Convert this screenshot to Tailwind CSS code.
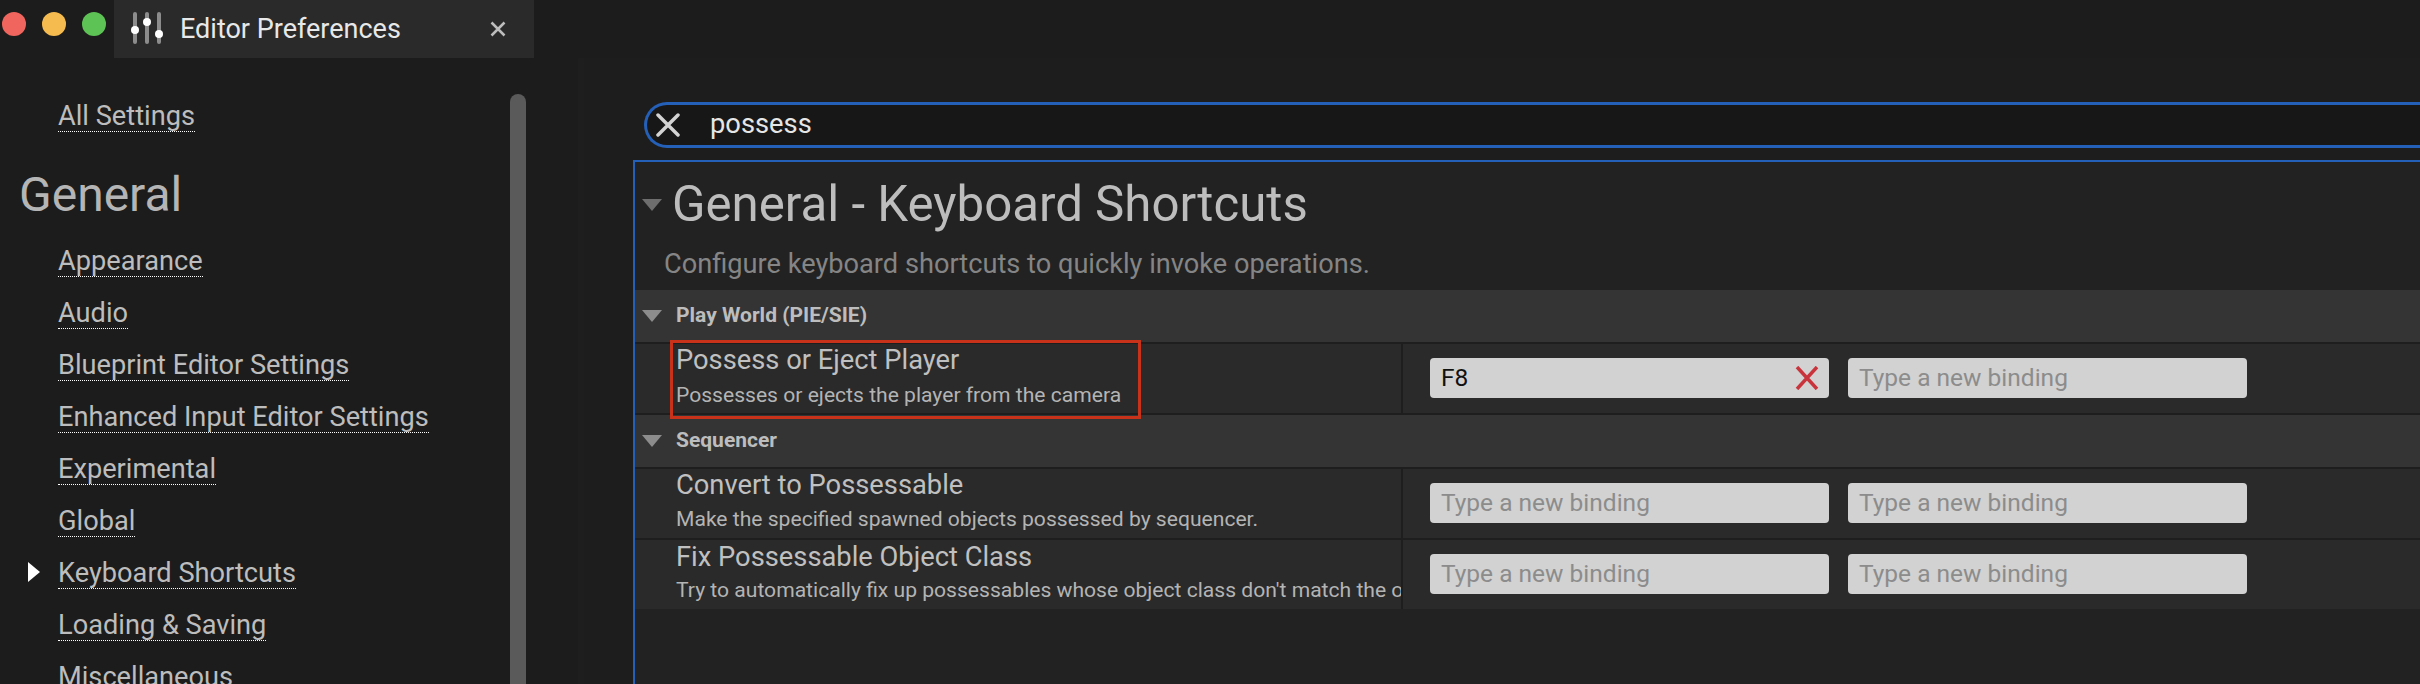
<!DOCTYPE html>
<html><head><meta charset="utf-8"><title>Editor Preferences</title>
<script src="https://cdn.jsdelivr.net/npm/@tailwindcss/browser@4"></script></head>
<body class="w-[2420px] h-[684px] overflow-hidden bg-[#1c1c1c] font-['Roboto',sans-serif]">
<header class="h-[58px] flex">
  <div class="flex gap-4 pl-[2px] pt-3 w-[114px]">
    <span class="w-6 h-6 rounded-full bg-[#f0665e]"></span>
    <span class="w-6 h-6 rounded-full bg-[#f6bb4f]"></span>
    <span class="w-6 h-6 rounded-full bg-[#5cc354]"></span>
  </div>
  <div class="w-[420px] bg-[#2a2a2a] flex items-center pl-4">
    <svg class="w-9 h-9" viewBox="0 0 36 36"><g fill="#8c8c8c"><rect x="3" y="1" width="4" height="32" rx="2"/><rect x="15" y="1" width="4" height="32" rx="2"/><rect x="27" y="1" width="4" height="32" rx="2"/></g><g fill="#fff"><circle cx="5" cy="19" r="4"/><circle cx="17" cy="11" r="4"/><circle cx="29" cy="23" r="4"/></g></svg>
    <span class="ml-[14px] text-[27px] leading-none text-[#e8e8e8] w-[310px] whitespace-nowrap">Editor Preferences</span>
    <svg class="w-4 h-4" viewBox="0 0 16 16"><path d="M1.5 1.5L14.500 14.500M14.500 1.500L1.500 14.500" stroke="#bdbdbd" stroke-width="2.500"/></svg>
  </div>
</header>
<div class="flex h-[626px]">
  <aside class="w-[578px] shrink-0 flex">
    <nav class="w-[510px] pl-[58px] pt-[38px] text-[#bdbdbd] text-[27.200px]">
      <a class="block h-[52px] w-fit"><span class="block h-[36px] leading-[40px] border-b border-dotted border-white">All Settings</span></a>
      <h2 class="text-[48px] leading-[56px] h-[93px] -ml-[39px] pt-[19px] text-[#b5b5b5]">General</h2>
      <a class="block h-[52px] w-fit"><span class="block h-[36px] leading-[40px] border-b border-dotted border-white">Appearance</span></a>
      <a class="block h-[52px] w-fit"><span class="block h-[36px] leading-[40px] border-b border-dotted border-white">Audio</span></a>
      <a class="block h-[52px] w-fit"><span class="block h-[36px] leading-[40px] border-b border-dotted border-white">Blueprint Editor Settings</span></a>
      <a class="block h-[52px] w-fit"><span class="block h-[36px] leading-[40px] border-b border-dotted border-white">Enhanced Input Editor Settings</span></a>
      <a class="block h-[52px] w-fit"><span class="block h-[36px] leading-[40px] border-b border-dotted border-white">Experimental</span></a>
      <a class="block h-[52px] w-fit"><span class="block h-[36px] leading-[40px] border-b border-dotted border-white">Global</span></a>
      <a class="block h-[52px] w-fit relative"><svg class="absolute -left-[30px] top-[9px] w-3 h-5" viewBox="0 0 12 20"><path d="M0 0L12 10L0 20Z" fill="#fff"/></svg><span class="block h-[36px] leading-[40px] border-b border-dotted border-white">Keyboard Shortcuts</span></a>
      <a class="block h-[52px] w-fit"><span class="block h-[36px] leading-[40px] border-b border-dotted border-white">Loading &amp; Saving</span></a>
      <a class="block h-[52px] w-fit"><span class="block h-[36px] leading-[40px] border-b border-dotted border-white">Miscellaneous</span></a>
    </nav>
    <div class="w-4 mt-[36px] rounded-t-full bg-[#5a5a5a]"></div>
  </aside>
  <div class="w-[6px] bg-[#1e1e1e]"></div>
  <main class="flex-1 min-w-0 pl-[49px] bg-[#1d1d1d]">
    <div class="h-[46px] mt-[44px] ml-[11px] border-[3px] border-r-0 border-[#2560b8] rounded-l-[23px] bg-[#171717] flex items-center pl-[9px]">
      <svg class="w-6 h-6" viewBox="0 0 24 24"><path d="M2 2L22 22M22 2L2 22" stroke="#d4d4d4" stroke-width="3.500" stroke-linecap="round"/></svg>
      <span class="ml-[30px] text-[27.300px] leading-none text-[#e6e6e6]">possess</span>
    </div>
    <section class="mt-[12px] h-[530px] border-l-2 border-t-2 border-[#2560b8] bg-[#222222]">
      <div class="h-[80px] flex items-center pl-[7px] pt-[6px]">
        <svg class="w-5 h-3" viewBox="0 0 20 12"><path d="M0 0H20L10 12Z" fill="#6e6e6e"/></svg>
        <h1 class="ml-[10px] text-[49.200px] leading-none text-[#bdbdbd]">General - Keyboard Shortcuts</h1>
      </div>
      <p class="h-[48px] pl-[29px] text-[27.200px] leading-[44px] text-[#858585]">Configure keyboard shortcuts to quickly invoke operations.</p>
      <div class="h-[54px] bg-[#343434] flex items-center pl-[7px] border-b-2 border-[#1e1e1e]">
        <svg class="w-5 h-3" viewBox="0 0 20 12"><path d="M0 0H20L10 12Z" fill="#8c8c8c"/></svg>
        <span class="ml-[14px] text-[21px] font-bold text-[#bdbdbd]">Play World (PIE/SIE)</span>
      </div>
      <div class="relative h-[71px] bg-[#2a2a2a] flex border-b-2 border-[#1e1e1e]">
        <div class="w-[768px] overflow-hidden pl-[41px] border-r-2 border-[#1e1e1e] whitespace-nowrap">
          <div class="text-[27.300px] leading-[30px] mt-[1px] text-[#c0c0c0]">Possess or Eject Player</div>
          <div class="text-[21.100px] leading-[24px] mt-[8px] text-[#b4b4b4]">Possesses or ejects the player from the camera</div>
        </div>
        <div class="flex gap-[19px] pl-[27px] pt-[14px]">
          <div class="w-[399px] h-10 rounded-[4px] bg-[#d2d2d2] flex items-center justify-between px-[11px] text-[24.500px] text-[#111]">F8<svg class="w-6 h-6 -mr-[1px]" viewBox="0 0 24 24"><path d="M2 1L22 23M22 1L2 23" stroke="#c9343c" stroke-width="3.500"/></svg></div>
          <div class="w-[399px] h-10 rounded-[4px] bg-[#d2d2d2] flex items-center px-[11px] text-[24.500px] text-[#8c8c8c]">Type a new binding</div>
        </div>
        <div class="absolute left-[35px] -top-[4px] w-[471px] h-[79px] border-[3px] border-[#c8321a]"></div>
      </div>
      <div class="h-[54px] bg-[#343434] flex items-center pl-[7px] border-b-2 border-[#1e1e1e]">
        <svg class="w-5 h-3" viewBox="0 0 20 12"><path d="M0 0H20L10 12Z" fill="#8c8c8c"/></svg>
        <span class="ml-[14px] text-[21px] font-bold text-[#bdbdbd]">Sequencer</span>
      </div>
      <div class="h-[71px] bg-[#2a2a2a] flex border-b-2 border-[#1e1e1e]">
        <div class="w-[768px] overflow-hidden pl-[41px] border-r-2 border-[#1e1e1e] whitespace-nowrap">
          <div class="text-[27.300px] leading-[30px] mt-[1px] text-[#c0c0c0]">Convert to Possessable</div>
          <div class="text-[21.100px] leading-[24px] mt-[7px] text-[#b4b4b4]">Make the specified spawned objects possessed by sequencer.</div>
        </div>
        <div class="flex gap-[19px] pl-[27px] pt-[14px]">
          <div class="w-[399px] h-10 rounded-[4px] bg-[#d2d2d2] flex items-center px-[11px] text-[24.500px] text-[#8c8c8c]">Type a new binding</div>
          <div class="w-[399px] h-10 rounded-[4px] bg-[#d2d2d2] flex items-center px-[11px] text-[24.500px] text-[#8c8c8c]">Type a new binding</div>
        </div>
      </div>
      <div class="h-[69px] bg-[#2a2a2a] flex">
        <div class="w-[768px] overflow-hidden pl-[41px] border-r-2 border-[#1e1e1e] whitespace-nowrap">
          <div class="text-[27.300px] leading-[30px] mt-[2px] text-[#c0c0c0]">Fix Possessable Object Class</div>
          <div class="text-[21.100px] leading-[24px] mt-[6px] text-[#b4b4b4]">Try to automatically fix up possessables whose object class don't match the object</div>
        </div>
        <div class="flex gap-[19px] pl-[27px] pt-[14px]">
          <div class="w-[399px] h-10 rounded-[4px] bg-[#d2d2d2] flex items-center px-[11px] text-[24.500px] text-[#8c8c8c]">Type a new binding</div>
          <div class="w-[399px] h-10 rounded-[4px] bg-[#d2d2d2] flex items-center px-[11px] text-[24.500px] text-[#8c8c8c]">Type a new binding</div>
        </div>
      </div>
    </section>
  </main>
</div>
</body></html>
